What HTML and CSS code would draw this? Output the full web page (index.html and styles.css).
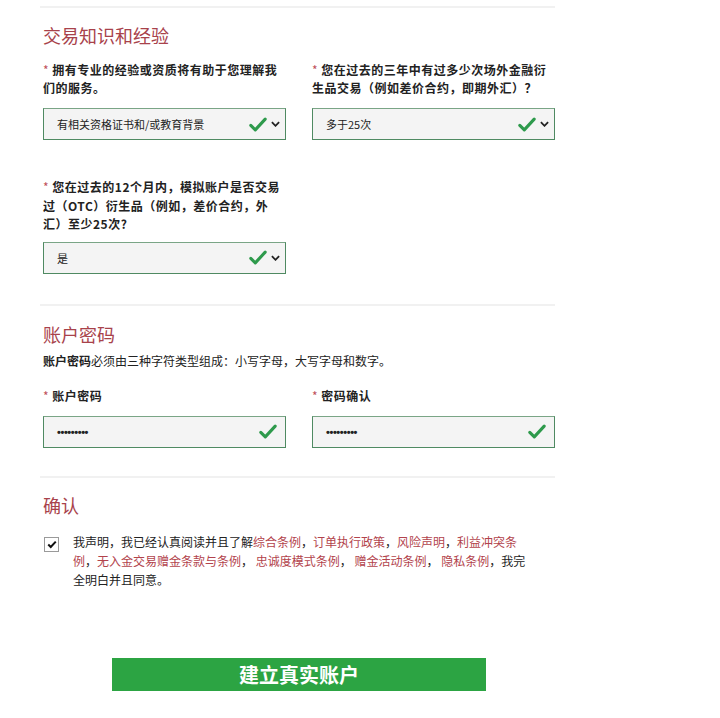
FILE: index.html
```html
<!DOCTYPE html>
<html lang="zh-CN">
  <head>
    <meta charset="UTF-8" />
    <meta name="viewport" content="width=device-width, initial-scale=1.0" />
    <title>建立真实账户</title>
    <link rel="stylesheet" href="styles.css">
  </head>
  <body>
    <div id="container">
      <hr class="divider top" />

      <section class="block" id="experience">
        <h3>交易知识和经验</h3>
        <div class="row">
          <div class="field">
            <label><span class="req">*</span> 拥有专业的经验或资质将有助于您理解我们的服务。</label>
            <div class="box">
              <span class="value">有相关资格证书和/或教育背景</span>
              <svg class="tick" viewBox="0 0 20 16"><path d="M2 9 L7 14 L18 2" /></svg>
              <svg class="chev" viewBox="0 0 10 6"><path d="M1 1 L5 5 L9 1" /></svg>
            </div>
          </div>
          <div class="field">
            <label><span class="req">*</span> 您在过去的三年中有过多少次场外金融衍生品交易（例如差价合约，即期外汇）？</label>
            <div class="box">
              <span class="value">多于25次</span>
              <svg class="tick" viewBox="0 0 20 16"><path d="M2 9 L7 14 L18 2" /></svg>
              <svg class="chev" viewBox="0 0 10 6"><path d="M1 1 L5 5 L9 1" /></svg>
            </div>
          </div>
        </div>
        <div class="row second">
          <div class="field">
            <label class="tall"><span class="req">*</span> 您在过去的12个月内，模拟账户是否交易过（OTC）衍生品（例如，差价合约，外汇）至少25次?</label>
            <div class="box">
              <span class="value">是</span>
              <svg class="tick" viewBox="0 0 20 16"><path d="M2 9 L7 14 L18 2" /></svg>
              <svg class="chev" viewBox="0 0 10 6"><path d="M1 1 L5 5 L9 1" /></svg>
            </div>
          </div>
        </div>
      </section>

      <hr class="divider" />

      <section class="block" id="password">
        <h3>账户密码</h3>
        <p class="note"><b>账户密码</b>必须由三种字符类型组成：小写字母，大写字母和数字。</p>
        <div class="row">
          <div class="field">
            <label><span class="req">*</span> 账户密码</label>
            <div class="box">
              <span class="dots">•••••••••</span>
              <svg class="tick solo" viewBox="0 0 20 16"><path d="M2 9 L7 14 L18 2" /></svg>
            </div>
          </div>
          <div class="field">
            <label><span class="req">*</span> 密码确认</label>
            <div class="box">
              <span class="dots">•••••••••</span>
              <svg class="tick solo" viewBox="0 0 20 16"><path d="M2 9 L7 14 L18 2" /></svg>
            </div>
          </div>
        </div>
      </section>

      <hr class="divider" />

      <section class="block" id="confirm">
        <h3>确认</h3>
        <div class="agree">
          <span class="check">
            <svg viewBox="0 0 12 10"><path d="M1.5 5 L4.5 8 L10.5 1.5" /></svg>
          </span>
          <p>我声明，我已经认真阅读并且了解<a>综合条例</a>，<a>订单执行政策</a>，<a>风险声明</a>，<a>利益冲突条例</a>，<a>无入金交易赠金条款与条例</a>， <a>忠诚度模式条例</a>， <a>赠金活动条例</a>， <a>隐私条例</a>，我完全明白并且同意。</p>
        </div>
      </section>

      <button id="sbmt">建立真实账户</button>
    </div>
  </body>
</html>
```

FILE: styles.css
```css
body {
  margin: 0;
  background-color: #ffffff;
  font-family: "Noto Sans CJK SC", "Liberation Sans", sans-serif;
  color: #222;
}
#container {
  width: 512px;
  padding: 6px 0 0 43px;
}
.divider {
  border: none;
  border-top: 2px solid #f1f1f1;
  margin: 0 0 0 -3px;
  width: 515px;
}
h3 {
  margin: 0;
  font-size: 18px;
  line-height: 24px;
  font-weight: normal;
  color: #a8424b;
}
.block {
  padding-top: 16px;
}
#experience {
  padding-top: 15px;
  padding-bottom: 30px;
}
.row {
  display: flex;
  gap: 26px;
  margin-top: 14px;
}
.row.second {
  margin-top: 38px;
}
.field {
  width: 243px;
}
label {
  display: block;
  font-size: 12px;
  letter-spacing: 0.5px;
  line-height: 18px;
  font-weight: bold;
  color: #222;
  min-height: 36px;
  margin-bottom: 11px;
}
label.tall {
  line-height: 18.5px;
  min-height: 55px;
  margin-bottom: 8px;
}
.req {
  color: #c0505a;
  font-weight: normal;
}
.box {
  height: 30px;
  border: 1px solid #4f8a62;
  border-top-color: #7aa586;
  background-color: #f4f4f4;
  display: flex;
  align-items: center;
  padding: 0 5px 0 13px;
}
.value {
  flex: 1;
  font-size: 11px;
  color: #222;
}
.dots {
  flex: 1;
  font-family: "Liberation Sans", sans-serif;
  font-size: 11px;
  font-weight: bold;
  letter-spacing: -0.4px;
  color: #222;
}
.tick {
  width: 18px;
  height: 15px;
  fill: none;
  stroke: #2e9a4c;
  stroke-width: 3.4;
  stroke-linecap: round;
  stroke-linejoin: round;
}
.tick.solo {
  margin-right: 3px;
}
.chev {
  width: 9px;
  height: 6px;
  margin-left: 4px;
  fill: none;
  stroke: #222;
  stroke-width: 2;
}
#password {
  padding-bottom: 28px;
}
#password .row {
  margin-top: 17px;
}
#password label {
  min-height: 18px;
  margin-bottom: 11px;
}
.note {
  margin: 6px 0 0;
  font-size: 12px;
  line-height: 18px;
  color: #222;
}
#confirm {
  padding-top: 15px;
}
.agree {
  display: flex;
  margin-top: 15px;
  width: 490px;
}
.check {
  flex: none;
  width: 13px;
  height: 13px;
  border: 1px solid #9a9a9a;
  display: flex;
  align-items: center;
  justify-content: center;
  margin: 5px 14px 0 1px;
}
.check svg {
  width: 10px;
  height: 9px;
  fill: none;
  stroke: #111;
  stroke-width: 2.4;
}
.agree p {
  margin: 0;
  font-size: 12px;
  line-height: 19px;
  color: #222;
}
.agree a {
  color: #b2434c;
}
#sbmt {
  display: block;
  width: 374px;
  height: 33px;
  margin: 69px 0 0 69px;
  border: none;
  background-color: #2ca443;
  color: #ffffff;
  font-family: "Noto Sans CJK SC", sans-serif;
  font-size: 20px;
  font-weight: bold;
  cursor: pointer;
}
```
